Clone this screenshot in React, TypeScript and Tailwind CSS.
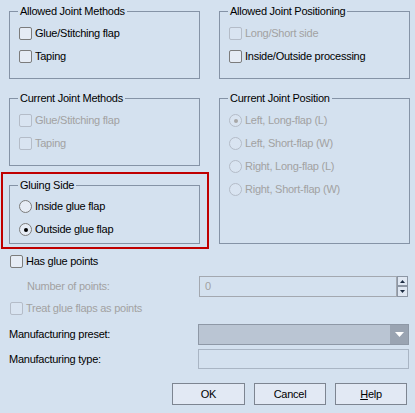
import type { ReactNode } from "react";

const Check = ({ label, disabled }: { label: string; disabled?: boolean }) => (
  <div className="flex items-center h-[23px]">
    <span
      className={
        "w-[13px] h-[13px] rounded-[2px] border " +
        (disabled ? "border-[#b4bcc8] bg-[#d9e4f1]" : "border-[#7c7c7c] bg-[#e6ecf5]")
      }
    />
    <span className={"ml-[3px] " + (disabled ? "text-[#a2a2a2]" : "text-black")}>{label}</span>
  </div>
);

const Radio = ({ label, disabled, checked }: { label: string; disabled?: boolean; checked?: boolean }) => (
  <div className="flex items-center h-[23px]">
    <span
      className={
        "w-[13px] h-[13px] rounded-full border flex items-center justify-center " +
        (disabled ? "border-[#b4bcc8] bg-[#d9e4f1]" : "border-[#7c7c7c] bg-[#e6ecf5]")
      }
    >
      {checked && (
        <span className={"w-[4px] h-[4px] rounded-full " + (disabled ? "bg-[#a8a8a8]" : "bg-black")} />
      )}
    </span>
    <span className={"ml-[3px] " + (disabled ? "text-[#a2a2a2]" : "text-black")}>{label}</span>
  </div>
);

const Group = ({ title, className, children }: { title: string; className: string; children: ReactNode }) => (
  <div className={"relative border border-[#8593a6] px-[9px] " + className}>
    <span className="absolute -top-[8px] left-[8px] bg-[#d4e1ef] px-[2px] leading-[14px] text-black">
      {title}
    </span>
    {children}
  </div>
);

export default function App() {
  return (
    <div
      className="relative w-[415px] h-[413px] bg-[#d4e1ef] text-[11px] tracking-[-0.25px] overflow-hidden"
      style={{ fontFamily: '"Liberation Sans", Arial, sans-serif' }}
    >
      <div className="flex gap-[19px] pl-[9px] pt-[11px]">
        {/* left column */}
        <div className="flex flex-col w-[191px]">
          <Group title="Allowed Joint Methods" className="h-[68px] pt-[10px]">
            <Check label="Glue/Stitching flap" />
            <Check label="Taping" />
          </Group>
          <Group title="Current Joint Methods" className="h-[68px] pt-[10px] mt-[19px]">
            <Check label="Glue/Stitching flap" disabled />
            <Check label="Taping" disabled />
          </Group>
          <Group title="Gluing Side" className="h-[59px] pt-[9px] mt-[19px]">
            <Radio label="Inside glue flap" />
            <Radio label="Outside glue flap" checked />
          </Group>
        </div>
        {/* right column */}
        <div className="flex flex-col w-[191px]">
          <Group title="Allowed Joint Positioning" className="h-[68px] pt-[10px]">
            <Check label="Long/Short side" disabled />
            <Check label="Inside/Outside processing" />
          </Group>
          <Group title="Current Joint Position" className="h-[146px] pt-[10px] mt-[19px]">
            <Radio label="Left, Long-flap (L)" disabled checked />
            <Radio label="Left, Short-flap (W)" disabled />
            <Radio label="Right, Long-flap (L)" disabled />
            <Radio label="Right, Short-flap (W)" disabled />
          </Group>
        </div>
      </div>

      {/* highlight around gluing side */}
      <div className="absolute left-[1px] top-[172px] w-[208px] h-[77px] border-2 border-[#c00000]" />

      <div className="flex flex-col pl-[10px] mt-[6px]">
        <Check label="Has glue points" />
        <div className="flex items-center h-[21px] mt-[3px]">
          <span className="ml-[17px] w-[172px] text-[#a2a2a2]">Number of points:</span>
          <div className="w-[198px] h-[21px] border border-[#a3a8b0] flex items-center pl-[5px] text-[#a2a2a2]">
            0
          </div>
          <div className="flex flex-col">
            <div className="w-[11px] h-[10px] border border-[#8c96a4] bg-[#dfe7f2] flex items-center justify-center">
              <svg width="5" height="3" viewBox="0 0 5 3">
                <path d="M2.5 0 L5 3 L0 3 Z" fill="#1a2a40" />
              </svg>
            </div>
            <div className="w-[11px] h-[11px] border border-[#8c96a4] bg-[#dfe7f2] flex items-center justify-center">
              <svg width="5" height="3" viewBox="0 0 5 3">
                <path d="M0 0 L5 0 L2.5 3 Z" fill="#1a2a40" />
              </svg>
            </div>
          </div>
        </div>
        <Check label="Treat glue flaps as points" disabled />
      </div>

      <div className="flex flex-col pl-[9px] mt-[3px]">
        <div className="flex items-center h-[22px]">
          <span className="w-[189px]">Manufacturing preset:</span>
          <div className="flex w-[211px] h-[21px] border border-[#8e98a6] bg-[#bac5d3]">
            <div className="flex-1" />
            <div className="w-[18px] h-full bg-[#9aa4b2] flex items-center justify-center">
              <svg width="9" height="5" viewBox="0 0 9 5">
                <path d="M0 0 L9 0 L4.5 5 Z" fill="#ffffff" />
              </svg>
            </div>
          </div>
        </div>
        <div className="flex items-center h-[20px] mt-[4px]">
          <span className="w-[189px]">Manufacturing type:</span>
          <div className="w-[211px] h-[20px] border border-[#a9b5c4] bg-[#d4e1ef]" />
        </div>
      </div>

      <div className="flex justify-end gap-[9px] pr-[8px] mt-[14px]">
        <button className="w-[73px] h-[22px] border border-[#7d8591] bg-[#e2e9f4] text-black">OK</button>
        <button className="w-[72px] h-[22px] border border-[#7d8591] bg-[#e2e9f4] text-black">Cancel</button>
        <button className="w-[72px] h-[22px] border border-[#7d8591] bg-[#e2e9f4] text-black">
          <span className="underline">H</span>elp
        </button>
      </div>
    </div>
  );
}
